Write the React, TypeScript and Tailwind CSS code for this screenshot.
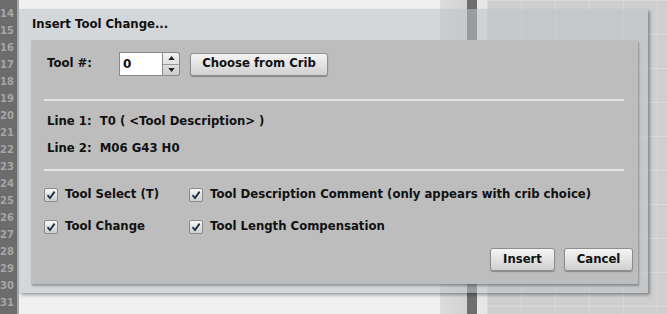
import React from 'react';

const font = "font-['DejaVu_Sans',sans-serif]";

const lineNumbers = Array.from({ length: 18 }, (_, i) => 14 + i);

function Check({ label }: { label: string }) {
  return (
    <label className="flex items-center gap-[7px]">
      <span className="flex h-[14px] w-[14px] shrink-0 items-center justify-center rounded-[2px] border border-[#8a8a8a] bg-gradient-to-b from-[#f6f6f6] to-[#cfcfcf]">
        <svg viewBox="0 0 10 10" className="h-[10px] w-[10px]">
          <path d="M1.5 5.2 L4 8 L8.6 1.6" fill="none" stroke="#1d2a44" strokeWidth="1.8" />
        </svg>
      </span>
      <span className="whitespace-nowrap">{label}</span>
    </label>
  );
}

function Button({ children, className }: { children: React.ReactNode; className?: string }) {
  return (
    <button
      className={`flex h-[23px] items-center justify-center rounded-[3px] border border-[#8e8e8e] bg-gradient-to-b from-[#f5f5f5] to-[#d0d0d0] text-[#111] shadow-[0_1px_1px_rgba(0,0,0,0.3)] ${className ?? ''}`}
    >
      {children}
    </button>
  );
}

export default function App() {
  return (
    <div className={`relative flex h-[314px] w-[667px] overflow-hidden bg-[#f0f0f0] ${font}`}>
      {/* line gutter */}
      <div className="flex w-[17px] flex-col items-end overflow-hidden bg-[#6c6c6c] pr-[3px] pt-[5px] text-[10px] font-bold text-[#a6a6a6]">
        {lineNumbers.map((n) => (
          <div key={n} className="flex h-[17px] shrink-0 items-center leading-none">
            {n}
          </div>
        ))}
      </div>
      <div className="w-[2px] bg-[#a9a9a9]" />
      {/* editor area */}
      <div className="w-[421px] bg-[#f0f0f0]" />
      <div className="w-[27px] bg-gradient-to-r from-[#dcdcdc] to-[#d2d2d2]" />
      <div className="w-[10px] bg-[#6e6e6e]" />
      <div className="w-[10px] bg-[#e6e6e6]" />
      {/* canvas grid */}
      <div className="flex-1 bg-[#cfcfcf] bg-[linear-gradient(to_right,rgba(255,255,255,0.18)_1px,transparent_1px),linear-gradient(to_bottom,rgba(255,255,255,0.18)_1px,transparent_1px)] bg-[length:34px_34px]" />

      {/* dialog */}
      <div className="absolute left-[19px] top-[9px] flex h-[284px] w-[629px] flex-col bg-[#bcc3c8]/55 shadow-[2px_2px_3px_rgba(0,0,0,0.35)]">
        <div className="flex h-[31px] items-center pl-[13px] text-[11.7px] font-bold text-[#111]">
          Insert Tool Change...
        </div>
        <div className="ml-[12px] mr-[10px] flex flex-1 flex-col bg-[#bdbdbd] px-[13px] text-[11.7px] font-bold text-[#111] shadow-[1px_2px_2px_rgba(0,0,0,0.3)]">
          <div className="mt-[12px] flex h-[24px] items-center">
            <span className="w-[75px] pl-[3px]">Tool #:</span>
            <div className="flex h-[24px]">
              <div className="flex w-[44px] items-center border border-[#8a8a8a] bg-white pl-[3px] text-[12px]">0</div>
              <div className="flex w-[17px] flex-col rounded-r-[3px] border border-l-0 border-[#8a8a8a] bg-gradient-to-b from-[#f3f3f3] to-[#cdcdcd]">
                <div className="flex flex-1 items-center justify-center border-b border-[#9a9a9a]">
                  <svg viewBox="0 0 8 5" className="h-[4px] w-[7px]"><path d="M0 5 L4 0 L8 5 Z" fill="#222" /></svg>
                </div>
                <div className="flex flex-1 items-center justify-center">
                  <svg viewBox="0 0 8 5" className="h-[4px] w-[7px]"><path d="M0 0 L8 0 L4 5 Z" fill="#222" /></svg>
                </div>
              </div>
            </div>
            <Button className="ml-[10px] w-[138px]">Choose from Crib</Button>
          </div>

          <div className="mt-[23px] h-[2px] w-[580px] bg-[#e4e4e4]" />

          <div className="mt-[14px] flex h-[14px] items-center whitespace-pre pl-[3px]">Line 1:  T0 ( &lt;Tool Description&gt; )</div>
          <div className="mt-[13px] flex h-[14px] items-center whitespace-pre pl-[3px]">Line 2:  M06 G43 H0</div>

          <div className="mt-[13px] h-[2px] w-[580px] bg-[#e4e4e4]" />

          <div className="mt-[17px] flex h-[14px] items-center">
            <div className="w-[145px]"><Check label="Tool Select (T)" /></div>
            <Check label="Tool Description Comment (only appears with crib choice)" />
          </div>
          <div className="mt-[18px] flex h-[14px] items-center">
            <div className="w-[145px]"><Check label="Tool Change" /></div>
            <Check label="Tool Length Compensation" />
          </div>

          <div className="mt-[14px] flex justify-end gap-[9px]">
            <Button className="w-[65px]">Insert</Button>
            <Button className="mr-[-8px] w-[69px]">Cancel</Button>
          </div>
        </div>
        <div className="h-[9px]" />
      </div>
    </div>
  );
}
